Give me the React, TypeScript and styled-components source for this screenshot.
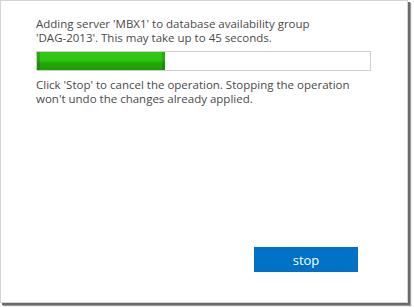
import styled, { createGlobalStyle } from 'styled-components'

const GlobalStyle = createGlobalStyle`
  html, body {
    margin: 0;
    padding: 0;
    background: #ffffff;
  }
  body {
    width: 414px;
    height: 307px;
    overflow: hidden;
  }
`

const Dialog = styled.div`
  box-sizing: border-box;
  width: 408px;
  height: 303px;
  background: #ffffff;
  border: 1px solid #d4d4d4;
  box-shadow: 2px 2px 0 #6a6a6a, 3px 3px 1px #9a9a9a;
  padding: 16px 36px 0 35px;
  display: flex;
  flex-direction: column;
  font-family: 'Open Sans', 'Segoe UI', sans-serif;
  color: #4a4a4a;
`

const Message = styled.p`
  margin: 0;
  font-size: 11.5px;
  line-height: 14px;
`

const ProgressTrack = styled.div`
  box-sizing: border-box;
  margin: 6px 0 7px;
  width: 335px;
  height: 20px;
  border: 1px solid #cfcfcf;
  background: #ffffff;
  display: flex;
`

const ProgressFill = styled.div`
  height: 100%;
  background: linear-gradient(#34c913 0%, #2fc40f 45%, #23a70a 60%, #1f9c06 100%);
  box-shadow: inset 3px 0 0 rgba(0, 90, 0, 0.25), inset -3px 0 0 rgba(0, 90, 0, 0.25);
`

const Footer = styled.div`
  margin-top: auto;
  display: flex;
  justify-content: flex-end;
  padding: 0 13px 30px 0;
`

const StopButton = styled.button`
  width: 104px;
  height: 25px;
  border: none;
  background: #0072c6;
  color: #ffffff;
  font-family: 'Open Sans', 'Segoe UI', sans-serif;
  font-size: 13px;
  padding: 0;
  cursor: pointer;
`

export default function App() {
  const progress = 128
  return (
    <>
      <GlobalStyle />
      <Dialog>
        <Message>
          Adding server 'MBX1' to database availability group
          <br />
          'DAG-2013'. This may take up to 45 seconds.
        </Message>
        <ProgressTrack>
          <ProgressFill style={{ width: progress }} />
        </ProgressTrack>
        <Message>
          Click 'Stop' to cancel the operation. Stopping the operation
          <br />
          won't undo the changes already applied.
        </Message>
        <Footer>
          <StopButton>stop</StopButton>
        </Footer>
      </Dialog>
    </>
  )
}
